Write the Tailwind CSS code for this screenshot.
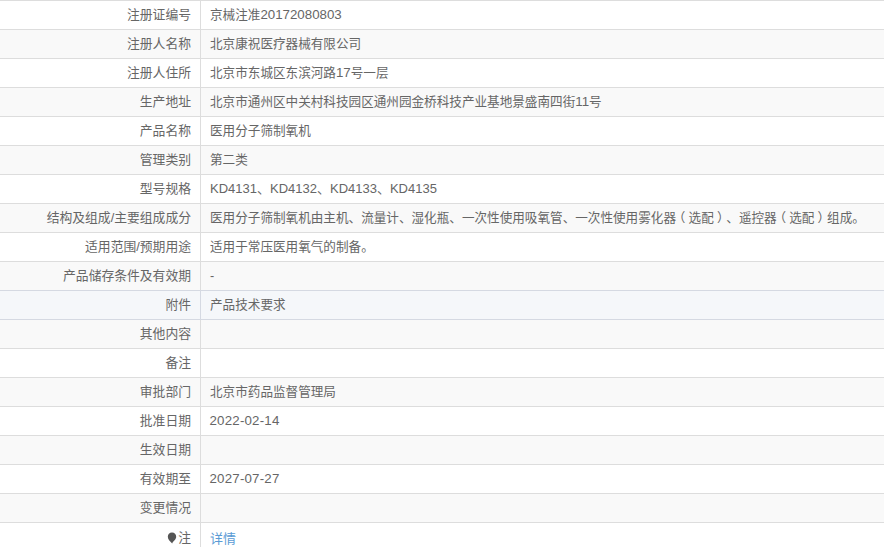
<!DOCTYPE html>
<html lang="zh"><head><meta charset="utf-8"><script src="https://cdn.jsdelivr.net/npm/@tailwindcss/browser@4"></script></head>
<body class="bg-white overflow-hidden">
<div class="h-[547px] overflow-hidden text-[12.6px] leading-[18px] text-[#666] font-['Liberation_Sans','Noto_Sans_CJK_SC',sans-serif]">
<div class="flex h-[29px] border-t border-[#ddd] bg-white"><div class="w-[201px] shrink-0 border-r border-[#ddd] pr-[9px] pt-[5px] text-right text-[12.8px]">注册证编号</div><div class="pl-[9px] pt-[5px] whitespace-nowrap">京械注准<span class="text-[13.3px]">20172080803</span></div></div>
<div class="flex h-[29px] border-t border-[#ddd] bg-[#f9f9f9]"><div class="w-[201px] shrink-0 border-r border-[#ddd] pr-[9px] pt-[5px] text-right text-[12.8px]">注册人名称</div><div class="pl-[9px] pt-[5px] whitespace-nowrap">北京康祝医疗器械有限公司</div></div>
<div class="flex h-[29px] border-t border-[#ddd] bg-white"><div class="w-[201px] shrink-0 border-r border-[#ddd] pr-[9px] pt-[5px] text-right text-[12.8px]">注册人住所</div><div class="pl-[9px] pt-[5px] whitespace-nowrap">北京市东城区东滨河路<span class="text-[13.3px]">17</span>号一层</div></div>
<div class="flex h-[29px] border-t border-[#ddd] bg-[#f9f9f9]"><div class="w-[201px] shrink-0 border-r border-[#ddd] pr-[9px] pt-[5px] text-right text-[12.8px]">生产地址</div><div class="pl-[9px] pt-[5px] whitespace-nowrap">北京市通州区中关村科技园区通州园金桥科技产业基地景盛南四街<span class="text-[13.3px]">11</span>号</div></div>
<div class="flex h-[29px] border-t border-[#ddd] bg-white"><div class="w-[201px] shrink-0 border-r border-[#ddd] pr-[9px] pt-[5px] text-right text-[12.8px]">产品名称</div><div class="pl-[9px] pt-[5px] whitespace-nowrap">医用分子筛制氧机</div></div>
<div class="flex h-[29px] border-t border-[#ddd] bg-[#f9f9f9]"><div class="w-[201px] shrink-0 border-r border-[#ddd] pr-[9px] pt-[5px] text-right text-[12.8px]">管理类别</div><div class="pl-[9px] pt-[5px] whitespace-nowrap">第二类</div></div>
<div class="flex h-[29px] border-t border-[#ddd] bg-white"><div class="w-[201px] shrink-0 border-r border-[#ddd] pr-[9px] pt-[5px] text-right text-[12.8px]">型号规格</div><div class="pl-[9px] pt-[5px] whitespace-nowrap text-[13px]">KD4131、KD4132、KD4133、KD4135</div></div>
<div class="flex h-[29px] border-t border-[#ddd] bg-[#f9f9f9]"><div class="w-[201px] shrink-0 border-r border-[#ddd] pr-[9px] pt-[5px] text-right text-[12.8px]">结构及组成/主要组成成分</div><div class="pl-[9px] pt-[5px] whitespace-nowrap">医用分子筛制氧机由主机、流量计、湿化瓶、一次性使用吸氧管、一次性使用雾化器<span class="px-[3.15px] [font-feature-settings:'halt']">（</span>选配<span class="px-[3.15px] [font-feature-settings:'halt']">）</span>、遥控器<span class="px-[3.15px] [font-feature-settings:'halt']">（</span>选配<span class="px-[3.15px] [font-feature-settings:'halt']">）</span>组成。</div></div>
<div class="flex h-[29px] border-t border-[#ddd] bg-white"><div class="w-[201px] shrink-0 border-r border-[#ddd] pr-[9px] pt-[5px] text-right text-[12.8px]">适用范围/预期用途</div><div class="pl-[9px] pt-[5px] whitespace-nowrap">适用于常压医用氧气的制备。</div></div>
<div class="flex h-[29px] border-t border-[#ddd] bg-[#f9f9f9]"><div class="w-[201px] shrink-0 border-r border-[#ddd] pr-[9px] pt-[5px] text-right text-[12.8px]">产品储存条件及有效期</div><div class="pl-[9px] pt-[5px] whitespace-nowrap">-</div></div>
<div class="flex h-[29px] border-t border-[#d5d9e2] bg-[#f5f7fa]"><div class="w-[201px] shrink-0 border-r border-[#d5d9e2] pr-[9px] pt-[5px] text-right text-[12.8px]">附件</div><div class="pl-[9px] pt-[5px] whitespace-nowrap">产品技术要求</div></div>
<div class="flex h-[29px] border-t border-[#d5d9e2] bg-[#f9f9f9]"><div class="w-[201px] shrink-0 border-r border-[#ddd] pr-[9px] pt-[5px] text-right text-[12.8px]">其他内容</div><div class="pl-[9px] pt-[5px] whitespace-nowrap"></div></div>
<div class="flex h-[29px] border-t border-[#ddd] bg-white"><div class="w-[201px] shrink-0 border-r border-[#ddd] pr-[9px] pt-[5px] text-right text-[12.8px]">备注</div><div class="pl-[9px] pt-[5px] whitespace-nowrap"></div></div>
<div class="flex h-[29px] border-t border-[#ddd] bg-[#f9f9f9]"><div class="w-[201px] shrink-0 border-r border-[#ddd] pr-[9px] pt-[5px] text-right text-[12.8px]">审批部门</div><div class="pl-[9px] pt-[5px] whitespace-nowrap">北京市药品监督管理局</div></div>
<div class="flex h-[29px] border-t border-[#ddd] bg-white"><div class="w-[201px] shrink-0 border-r border-[#ddd] pr-[9px] pt-[5px] text-right text-[12.8px]">批准日期</div><div class="pl-[8.5px] pt-[5px] whitespace-nowrap text-[13.3px] tracking-[0.2px]">2022-02-14</div></div>
<div class="flex h-[29px] border-t border-[#ddd] bg-[#f9f9f9]"><div class="w-[201px] shrink-0 border-r border-[#ddd] pr-[9px] pt-[5px] text-right text-[12.8px]">生效日期</div><div class="pl-[9px] pt-[5px] whitespace-nowrap"></div></div>
<div class="flex h-[29px] border-t border-[#ddd] bg-white"><div class="w-[201px] shrink-0 border-r border-[#ddd] pr-[9px] pt-[5px] text-right text-[12.8px]">有效期至</div><div class="pl-[8.5px] pt-[5px] whitespace-nowrap text-[13.3px] tracking-[0.2px]">2027-07-27</div></div>
<div class="flex h-[29px] border-t border-[#ddd] bg-[#f9f9f9]"><div class="w-[201px] shrink-0 border-r border-[#ddd] pr-[9px] pt-[5px] text-right text-[12.8px]">变更情况</div><div class="pl-[9px] pt-[5px] whitespace-nowrap"></div></div>
<div class="flex h-[29px] border-t border-[#ddd] bg-white"><div class="w-[201px] shrink-0 border-r border-[#ddd] pr-[9px] pt-[6px] flex justify-end items-start gap-px text-[12.8px]"><svg class="mt-[3px]" width="10" height="12" viewBox="0 0 10 12"><path d="M5 0.5C2.5 0.5 0.8 2.4 0.8 4.8C0.8 7.6 3.4 9.6 5.2 11.5C5.6 9.4 9.2 8 9.2 4.8C9.2 2.4 7.5 0.5 5 0.5Z" fill="#555"/></svg><span>注</span></div><div class="pl-[9px] pt-[7px] whitespace-nowrap text-[13px] text-[#5a9bd5]">详情</div></div>
</div>
</body></html>
